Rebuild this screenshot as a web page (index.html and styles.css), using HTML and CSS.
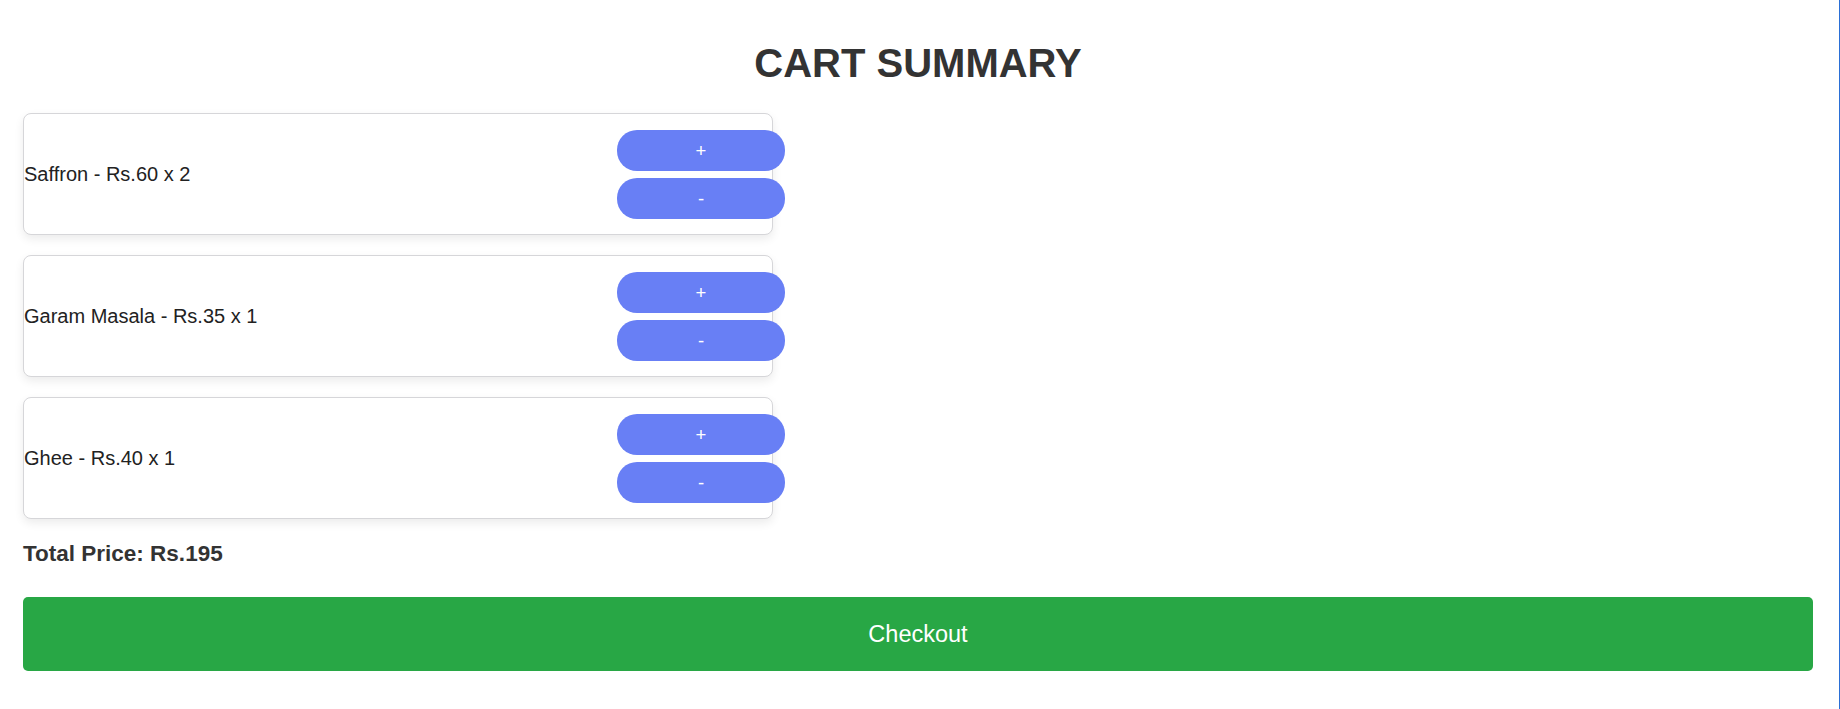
FILE: index.html
```html
<!DOCTYPE html>
<html lang="en">
<head>
<meta charset="utf-8">
<title>Cart Summary</title>
<link rel="stylesheet" href="styles.css">
</head>
<body>
<div class="page">
  <h1 class="title">CART SUMMARY</h1>
  <div class="items">
    <div class="item">
      <span class="item-text">Saffron - Rs.60 x 2</span>
      <div class="controls">
        <button class="qty-btn">+</button>
        <button class="qty-btn">-</button>
      </div>
    </div>
    <div class="item">
      <span class="item-text">Garam Masala - Rs.35 x 1</span>
      <div class="controls">
        <button class="qty-btn">+</button>
        <button class="qty-btn">-</button>
      </div>
    </div>
    <div class="item">
      <span class="item-text">Ghee - Rs.40 x 1</span>
      <div class="controls">
        <button class="qty-btn">+</button>
        <button class="qty-btn">-</button>
      </div>
    </div>
  </div>
  <h3 class="total">Total Price: Rs.195</h3>
  <button class="checkout">Checkout</button>
</div>
</body>
</html>
```
FILE: styles.css
```css
html, body {
  margin: 0;
  padding: 0;
  background: #ffffff;
}

body {
  font-family: "Liberation Sans", Arial, sans-serif;
  color: #333333;
}

.page {
  box-sizing: border-box;
  min-height: 100vh;
  padding: 41px 26px 0 23px;
  border-right: 1px solid #2a6fd6;
  display: flex;
  flex-direction: column;
}

.title {
  margin: 0;
  text-align: center;
  font-size: 40px;
  font-weight: bold;
  line-height: 45px;
  color: #333333;
}

.items {
  margin-top: 27px;
  display: flex;
  flex-direction: column;
  gap: 20px;
}

.item {
  box-sizing: border-box;
  width: 750px;
  height: 122px;
  padding: 16px 0 15px;
  border: 1px solid #d6d6d9;
  border-radius: 8px;
  background: #ffffff;
  box-shadow: 0 4px 10px rgba(0, 0, 0, 0.08);
  display: flex;
  align-items: center;
  justify-content: space-between;
}

.item-text {
  font-size: 20px;
  color: #222222;
}

.controls {
  display: flex;
  flex-direction: column;
  gap: 7px;
  margin-right: -13px;
}

.qty-btn {
  width: 168px;
  height: 41px;
  border: none;
  border-radius: 20px;
  background: #687ff5;
  color: #ffffff;
  font-family: "Liberation Sans", Arial, sans-serif;
  font-size: 18.5px;
  padding: 0;
}

.total {
  margin: 22px 0 0;
  font-size: 22.5px;
  line-height: 25px;
  font-weight: bold;
  color: #333333;
}

.checkout {
  margin-top: 31px;
  width: 100%;
  height: 74px;
  border: none;
  border-radius: 5px;
  background: #28a745;
  color: #ffffff;
  font-family: "Liberation Sans", Arial, sans-serif;
  font-size: 23.5px;
  padding: 0;
}
```
